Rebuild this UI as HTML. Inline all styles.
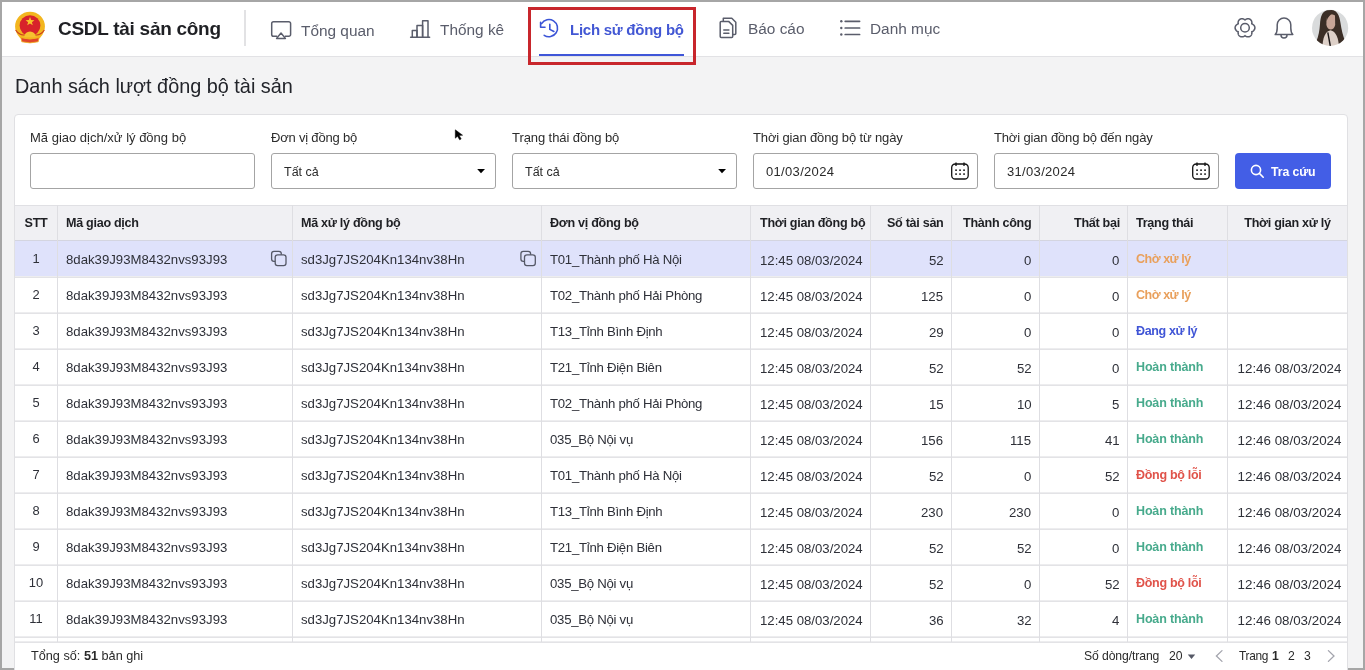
<!DOCTYPE html><html><head><meta charset="utf-8"><style>
*{box-sizing:border-box;margin:0;padding:0}
html,body{width:1365px;height:670px;overflow:hidden;background:#f3f3f4;font-family:"Liberation Sans",sans-serif;color:#222;position:relative}
div{position:absolute;white-space:nowrap}
.gb{background:#a6a6a6}
#hdr{left:2px;top:2px;width:1361px;height:54px;background:#fff}
#hline{left:2px;top:56px;width:1361px;height:1px;background:#e2e2e5}
.brand{left:58px;top:18.5px;font-size:19px;letter-spacing:-0.28px;line-height:20px;font-weight:700;color:#1f2024}
.vdiv{left:244px;top:10px;width:1.5px;height:36px;background:#e2e2e4}
.nav{top:22px;font-size:15.4px;line-height:18px;color:#5a5d6b}
.nav.act{color:#4257d4;font-weight:700;font-size:15px;letter-spacing:-0.25px}
.uline{left:539px;top:54px;width:145px;height:2px;background:#3f56d8}
.redbox{left:528px;top:7px;width:168px;height:58px;border:3px solid #c8262c}
.title{left:15px;top:75px;font-size:19.85px;line-height:22px;color:#22242a}
#card{left:14px;top:114px;width:1334px;height:600px;background:#fff;border:1px solid #e0e0e3;border-radius:4px}
.lbl{top:130px;font-size:13px;line-height:15px;color:#2c2c2c}
.inp{top:153px;width:225px;height:36px;border:1px solid #a4a4a4;border-radius:3px;background:#fff}
.inp span{position:absolute;left:12px;top:11px;font-size:12.5px;line-height:14px;color:#2a2a2a}
.btn{left:1235px;top:153px;width:96px;height:36px;background:#435ee6;border-radius:4px}
.btn span{position:absolute;left:36px;top:11.5px;font-size:12.3px;letter-spacing:-0.1px;line-height:15px;font-weight:700;color:#fff}
.thbg{left:15px;width:1332px;background:#f0f0f3}
.selbg{left:15px;width:1332px;background:#dfe2fb}
.hl{left:15px;width:1332px;height:1px;background:#e0e0e4}
.hl.hb{background:#d4d5e0}
.vl{width:1px;background:#dedee2}
.t{line-height:15px}
.ctr{text-align:center}
.th{font-size:12.6px;letter-spacing:-0.3px;font-weight:700;color:#1f2024}
.td{font-size:13.2px;letter-spacing:0px;color:#2e3038}
.st{font-size:12.5px;letter-spacing:-0.35px;font-weight:700}
.or{color:#e9a05c}.bl{color:#4055d6}.gr{color:#47aa8c}.rd{color:#e0534a}
.foot{left:31.4px;top:649px;font-size:12.7px;line-height:15px;color:#2a2a2a}
.pg{top:649px;font-size:12.5px;line-height:15px;color:#2a2a2a}

.dv{letter-spacing:-0.27px}
.inp span.dt{letter-spacing:0.32px;font-size:13px;top:11px}

.stt{font-size:12.9px}
body{-webkit-font-smoothing:antialiased}div.t,.nav,.brand,.title,.lbl,.inp span,.btn span,.foot,.pg{will-change:transform}

.tx{font-size:13.35px}

.hl2{left:15px;width:1332px;height:2px;border-top:1px solid #ededef;background:#e3e3e6}

</style></head><body>
<div class="gb" style="left:0;top:0;width:1365px;height:2px"></div>
<div class="gb" style="left:0;top:0;width:2px;height:670px"></div>
<div class="gb" style="left:1363px;top:0;width:2px;height:670px"></div>
<div class="gb" style="left:0;top:668px;width:1365px;height:2px"></div>
<div id="hdr"></div>
<div id="hline"></div>
<div class="brand">CSDL tài sản công</div>
<div class="vdiv"></div>
<div class="nav" style="left:301px;top:21.6px">Tổng quan</div>
<div class="nav" style="left:440px;top:20.5px">Thống kê</div>
<div class="nav act" style="left:570px;top:20.9px">Lịch sử đồng bộ</div>
<div class="nav" style="left:748px;top:19.5px">Báo cáo</div>
<div class="nav" style="left:870px;top:19.5px">Danh mục</div>
<div class="uline"></div>
<div class="redbox"></div>
<div class="title">Danh sách lượt đồng bộ tài sản</div>
<div id="card"></div>
<div class="lbl" style="left:30px;letter-spacing:0px">Mã giao dịch/xử lý đồng bộ</div>
<div class="lbl" style="left:271px;letter-spacing:-0.2px">Đơn vị đồng bộ</div>
<div class="lbl" style="left:512px;letter-spacing:-0.08px">Trạng thái đồng bộ</div>
<div class="lbl" style="left:753px;letter-spacing:-0.14px">Thời gian đồng bộ từ ngày</div>
<div class="lbl" style="left:994px;letter-spacing:-0.15px">Thời gian đồng bộ đến ngày</div>
<div class="inp" style="left:30px"></div>
<div class="inp" style="left:271px"><span>Tất cả</span></div>
<div class="inp" style="left:512px"><span>Tất cả</span></div>
<div class="inp" style="left:753px"><span class="dt">01/03/2024</span></div>
<div class="inp" style="left:994px"><span class="dt">31/03/2024</span></div>
<div class="btn"><span>Tra cứu</span></div>

<div class="thbg" style="top:205px;height:35px"></div>
<div class="selbg" style="top:241px;height:35px"></div>
<div class="hl" style="top:205px"></div>
<div class="hl hb" style="top:240px"></div>
<div class="hl2" style="top:276px"></div>
<div class="hl2" style="top:312px"></div>
<div class="hl2" style="top:348px"></div>
<div class="hl2" style="top:384px"></div>
<div class="hl2" style="top:420px"></div>
<div class="hl2" style="top:456px"></div>
<div class="hl2" style="top:492px"></div>
<div class="hl2" style="top:528px"></div>
<div class="hl2" style="top:564px"></div>
<div class="hl2" style="top:600px"></div>
<div class="hl2" style="top:636px"></div>
<div class="hl2" style="top:641px"></div>
<div class="vl" style="left:57px;top:205px;height:437px"></div>
<div class="vl" style="left:292px;top:205px;height:437px"></div>
<div class="vl" style="left:541px;top:205px;height:437px"></div>
<div class="vl" style="left:750px;top:205px;height:437px"></div>
<div class="vl" style="left:870px;top:205px;height:437px"></div>
<div class="vl" style="left:951px;top:205px;height:437px"></div>
<div class="vl" style="left:1039px;top:205px;height:437px"></div>
<div class="vl" style="left:1127px;top:205px;height:437px"></div>
<div class="vl" style="left:1227px;top:205px;height:437px"></div>
<div class="t th ctr" style="left:15px;width:42px;top:216px">STT</div>
<div class="t th" style="left:66px;top:216px">Mã giao dịch</div>
<div class="t th" style="left:301px;top:216px">Mã xử lý đồng bộ</div>
<div class="t th" style="left:550px;top:216px">Đơn vị đồng bộ</div>
<div class="t th" style="left:760px;top:216px">Thời gian đồng bộ</div>
<div class="t th" style="right:421.5px;top:216px">Số tài sản</div>
<div class="t th" style="right:333.5px;top:216px">Thành công</div>
<div class="t th" style="right:245.5px;top:216px">Thất bại</div>
<div class="t th" style="left:1136px;top:216px">Trạng thái</div>
<div class="t th ctr" style="left:1228px;width:119px;top:216px">Thời gian xử lý</div>
<div class="t td stt ctr" style="left:15px;width:42px;top:251px">1</div>
<div class="t td" style="left:66px;top:252px">8dak39J93M8432nvs93J93</div>
<div class="t td" style="left:301px;top:252px">sd3Jg7JS204Kn134nv38Hn</div>
<div class="t td dv" style="left:550px;top:252px">T01_Thành phố Hà Nội</div>
<div class="t td" style="left:760px;top:253px">12:45 08/03/2024</div>
<div class="t td" style="right:421.5px;top:253px">52</div>
<div class="t td" style="right:333.5px;top:253px">0</div>
<div class="t td" style="right:245.5px;top:253px">0</div>
<div class="t st or" style="letter-spacing:-0.47px;left:1136px;top:252px">Chờ xử lý</div>
<div class="t td stt ctr" style="left:15px;width:42px;top:287px">2</div>
<div class="t td" style="left:66px;top:288px">8dak39J93M8432nvs93J93</div>
<div class="t td" style="left:301px;top:288px">sd3Jg7JS204Kn134nv38Hn</div>
<div class="t td dv" style="left:550px;top:288px">T02_Thành phố Hải Phòng</div>
<div class="t td" style="left:760px;top:289px">12:45 08/03/2024</div>
<div class="t td" style="right:421.5px;top:289px">125</div>
<div class="t td" style="right:333.5px;top:289px">0</div>
<div class="t td" style="right:245.5px;top:289px">0</div>
<div class="t st or" style="letter-spacing:-0.47px;left:1136px;top:288px">Chờ xử lý</div>
<div class="t td stt ctr" style="left:15px;width:42px;top:323px">3</div>
<div class="t td" style="left:66px;top:324px">8dak39J93M8432nvs93J93</div>
<div class="t td" style="left:301px;top:324px">sd3Jg7JS204Kn134nv38Hn</div>
<div class="t td dv" style="left:550px;top:324px">T13_Tỉnh Bình Định</div>
<div class="t td" style="left:760px;top:325px">12:45 08/03/2024</div>
<div class="t td" style="right:421.5px;top:325px">29</div>
<div class="t td" style="right:333.5px;top:325px">0</div>
<div class="t td" style="right:245.5px;top:325px">0</div>
<div class="t st bl" style="letter-spacing:-0.35px;left:1136px;top:324px">Đang xử lý</div>
<div class="t td stt ctr" style="left:15px;width:42px;top:359px">4</div>
<div class="t td" style="left:66px;top:360px">8dak39J93M8432nvs93J93</div>
<div class="t td" style="left:301px;top:360px">sd3Jg7JS204Kn134nv38Hn</div>
<div class="t td dv" style="left:550px;top:360px">T21_Tỉnh Điện Biên</div>
<div class="t td" style="left:760px;top:361px">12:45 08/03/2024</div>
<div class="t td" style="right:421.5px;top:361px">52</div>
<div class="t td" style="right:333.5px;top:361px">52</div>
<div class="t td" style="right:245.5px;top:361px">0</div>
<div class="t st gr" style="letter-spacing:-0.15px;left:1136px;top:360px">Hoàn thành</div>
<div class="t td tx ctr" style="left:1229.5px;width:119.0px;top:361px">12:46 08/03/2024</div>
<div class="t td stt ctr" style="left:15px;width:42px;top:395px">5</div>
<div class="t td" style="left:66px;top:396px">8dak39J93M8432nvs93J93</div>
<div class="t td" style="left:301px;top:396px">sd3Jg7JS204Kn134nv38Hn</div>
<div class="t td dv" style="left:550px;top:396px">T02_Thành phố Hải Phòng</div>
<div class="t td" style="left:760px;top:397px">12:45 08/03/2024</div>
<div class="t td" style="right:421.5px;top:397px">15</div>
<div class="t td" style="right:333.5px;top:397px">10</div>
<div class="t td" style="right:245.5px;top:397px">5</div>
<div class="t st gr" style="letter-spacing:-0.15px;left:1136px;top:396px">Hoàn thành</div>
<div class="t td tx ctr" style="left:1229.5px;width:119.0px;top:397px">12:46 08/03/2024</div>
<div class="t td stt ctr" style="left:15px;width:42px;top:431px">6</div>
<div class="t td" style="left:66px;top:432px">8dak39J93M8432nvs93J93</div>
<div class="t td" style="left:301px;top:432px">sd3Jg7JS204Kn134nv38Hn</div>
<div class="t td dv" style="left:550px;top:432px">035_Bộ Nội vụ</div>
<div class="t td" style="left:760px;top:433px">12:45 08/03/2024</div>
<div class="t td" style="right:421.5px;top:433px">156</div>
<div class="t td" style="right:333.5px;top:433px">115</div>
<div class="t td" style="right:245.5px;top:433px">41</div>
<div class="t st gr" style="letter-spacing:-0.15px;left:1136px;top:432px">Hoàn thành</div>
<div class="t td tx ctr" style="left:1229.5px;width:119.0px;top:433px">12:46 08/03/2024</div>
<div class="t td stt ctr" style="left:15px;width:42px;top:467px">7</div>
<div class="t td" style="left:66px;top:468px">8dak39J93M8432nvs93J93</div>
<div class="t td" style="left:301px;top:468px">sd3Jg7JS204Kn134nv38Hn</div>
<div class="t td dv" style="left:550px;top:468px">T01_Thành phố Hà Nội</div>
<div class="t td" style="left:760px;top:469px">12:45 08/03/2024</div>
<div class="t td" style="right:421.5px;top:469px">52</div>
<div class="t td" style="right:333.5px;top:469px">0</div>
<div class="t td" style="right:245.5px;top:469px">52</div>
<div class="t st rd" style="letter-spacing:-0.3px;left:1136px;top:468px">Đồng bộ lỗi</div>
<div class="t td tx ctr" style="left:1229.5px;width:119.0px;top:469px">12:46 08/03/2024</div>
<div class="t td stt ctr" style="left:15px;width:42px;top:503px">8</div>
<div class="t td" style="left:66px;top:504px">8dak39J93M8432nvs93J93</div>
<div class="t td" style="left:301px;top:504px">sd3Jg7JS204Kn134nv38Hn</div>
<div class="t td dv" style="left:550px;top:504px">T13_Tỉnh Bình Định</div>
<div class="t td" style="left:760px;top:505px">12:45 08/03/2024</div>
<div class="t td" style="right:421.5px;top:505px">230</div>
<div class="t td" style="right:333.5px;top:505px">230</div>
<div class="t td" style="right:245.5px;top:505px">0</div>
<div class="t st gr" style="letter-spacing:-0.15px;left:1136px;top:504px">Hoàn thành</div>
<div class="t td tx ctr" style="left:1229.5px;width:119.0px;top:505px">12:46 08/03/2024</div>
<div class="t td stt ctr" style="left:15px;width:42px;top:539px">9</div>
<div class="t td" style="left:66px;top:540px">8dak39J93M8432nvs93J93</div>
<div class="t td" style="left:301px;top:540px">sd3Jg7JS204Kn134nv38Hn</div>
<div class="t td dv" style="left:550px;top:540px">T21_Tỉnh Điện Biên</div>
<div class="t td" style="left:760px;top:541px">12:45 08/03/2024</div>
<div class="t td" style="right:421.5px;top:541px">52</div>
<div class="t td" style="right:333.5px;top:541px">52</div>
<div class="t td" style="right:245.5px;top:541px">0</div>
<div class="t st gr" style="letter-spacing:-0.15px;left:1136px;top:540px">Hoàn thành</div>
<div class="t td tx ctr" style="left:1229.5px;width:119.0px;top:541px">12:46 08/03/2024</div>
<div class="t td stt ctr" style="left:15px;width:42px;top:575px">10</div>
<div class="t td" style="left:66px;top:576px">8dak39J93M8432nvs93J93</div>
<div class="t td" style="left:301px;top:576px">sd3Jg7JS204Kn134nv38Hn</div>
<div class="t td dv" style="left:550px;top:576px">035_Bộ Nội vụ</div>
<div class="t td" style="left:760px;top:577px">12:45 08/03/2024</div>
<div class="t td" style="right:421.5px;top:577px">52</div>
<div class="t td" style="right:333.5px;top:577px">0</div>
<div class="t td" style="right:245.5px;top:577px">52</div>
<div class="t st rd" style="letter-spacing:-0.3px;left:1136px;top:576px">Đồng bộ lỗi</div>
<div class="t td tx ctr" style="left:1229.5px;width:119.0px;top:577px">12:46 08/03/2024</div>
<div class="t td stt ctr" style="left:15px;width:42px;top:611px">11</div>
<div class="t td" style="left:66px;top:612px">8dak39J93M8432nvs93J93</div>
<div class="t td" style="left:301px;top:612px">sd3Jg7JS204Kn134nv38Hn</div>
<div class="t td dv" style="left:550px;top:612px">035_Bộ Nội vụ</div>
<div class="t td" style="left:760px;top:613px">12:45 08/03/2024</div>
<div class="t td" style="right:421.5px;top:613px">36</div>
<div class="t td" style="right:333.5px;top:613px">32</div>
<div class="t td" style="right:245.5px;top:613px">4</div>
<div class="t st gr" style="letter-spacing:-0.15px;left:1136px;top:612px">Hoàn thành</div>
<div class="t td tx ctr" style="left:1229.5px;width:119.0px;top:613px">12:46 08/03/2024</div>
<div class="foot">Tổng số: <b>51</b> bản ghi</div>
<div class="pg" style="left:1084px;font-size:12.2px;letter-spacing:-0.1px">Số dòng/trang</div>
<div class="pg" style="left:1168.5px;font-size:12.2px">20</div>
<div class="pg" style="left:1239px;font-size:11.9px;letter-spacing:-0.3px">Trang</div>
<div class="pg" style="left:1272px;font-weight:700;font-size:12.2px">1</div>
<div class="pg" style="left:1288.3px;font-size:12.2px">2</div>
<div class="pg" style="left:1304px;font-size:12.2px">3</div>
<svg style="position:absolute;left:0;top:0" width="1365" height="670" viewBox="0 0 1365 670">
 <!-- emblem -->
 <g>
  <circle cx="30" cy="26.6" r="14.9" fill="#f3b61f"/>
  <circle cx="30" cy="25.6" r="10.4" fill="#d8232a"/>
  <path d="M30 17 L31.2 20.1 L34.4 20.2 L31.9 22.2 L32.8 25.3 L30 23.5 L27.2 25.3 L28.1 22.2 L25.6 20.2 L28.8 20.1Z" fill="#f7c42a"/>
  <path d="M24.2 37.2 A5.8 5.8 0 0 1 35.8 37.2 Z" fill="#f6c230"/>
  <path d="M15.6 30 Q19.5 35.5 24.5 35" stroke="#c9361f" stroke-width="1.1" fill="none"/>
  <path d="M44.4 30 Q40.5 35.5 35.5 35" stroke="#c9361f" stroke-width="1.1" fill="none"/>
  <path d="M20.8 37.6 Q30 40.6 39.2 37.6 L38.2 41.8 Q30 44 21.8 41.8 Z" fill="#e0462a" stroke="#f3b61f" stroke-width="0.8"/>
 </g>
 <!-- nav icons -->
 <g fill="none" stroke="#5a5d6b" stroke-width="1.5" stroke-linecap="round" stroke-linejoin="round">
  <path d="M276.8 36.2 H273.5 A1.8 1.8 0 0 1 271.7 34.4 V23.6 A1.8 1.8 0 0 1 273.5 21.8 H288.8 A1.8 1.8 0 0 1 290.6 23.6 V34.4 A1.8 1.8 0 0 1 288.8 36.2 H285.2"/>
  <path d="M281 33 L276.6 38.4 H285.4 Z"/>
  <path d="M410.6 37.2 H429.6"/>
  <path d="M412.3 37.2 V30.6 H417 V37.2"/>
  <path d="M417 37.2 V25.6 H422.6 V37.2"/>
  <path d="M422.6 37.2 V20.8 H428 V37.2"/>
  <path d="M723.3 21.3 V18.3 H731.8 L735.8 22.3 V33.6 A1 1 0 0 1 734.8 34.6 H733"/>
  <path d="M721.2 21.4 H728.6 L732.7 25.4 V36.4 A1 1 0 0 1 731.7 37.4 H721.2 A1 1 0 0 1 720.2 36.4 V22.4 A1 1 0 0 1 721.2 21.4 Z"/>
  <path d="M723.8 30.1 H728.9 M723.8 33.2 H728.9"/>
  <path d="M845.2 21.3 H859.6 M845.2 28 H859.6 M845.2 34.5 H859.6" stroke-width="1.7"/>
 </g>
 <g fill="#5a5d6b"><circle cx="841.3" cy="21.3" r="1.2"/><circle cx="841.3" cy="28" r="1.2"/><circle cx="841.3" cy="34.5" r="1.2"/></g>
 <g fill="none" stroke="#3b54d6" stroke-width="1.6" stroke-linecap="round" stroke-linejoin="round">
  <path d="M544.2 35.3 A8.6 8.6 0 1 0 541.6 23.6"/>
  <path d="M540.6 22.3 V27.2 H545"/>
  <path d="M549.8 24.2 V29.4 L553.9 31.5"/>
 </g>
 <!-- gear bell -->
 <g fill="none" stroke="#5a5d6b" stroke-width="1.5" stroke-linejoin="round">
  <path d="M1254.90 27.80 L1254.88 28.15 L1254.83 28.49 L1254.75 28.83 L1254.64 29.15 L1254.50 29.47 L1254.33 29.78 L1254.13 30.08 L1253.90 30.35 L1253.66 30.61 L1253.39 30.85 L1253.10 31.07 L1252.79 31.27 L1252.47 31.44 L1252.13 31.59 L1251.75 31.70 L1251.85 32.08 L1251.89 32.45 L1251.90 32.81 L1251.88 33.18 L1251.84 33.54 L1251.76 33.89 L1251.66 34.23 L1251.54 34.57 L1251.38 34.89 L1251.20 35.19 L1250.99 35.47 L1250.76 35.73 L1250.51 35.97 L1250.24 36.19 L1249.95 36.37 L1249.64 36.53 L1249.32 36.66 L1248.99 36.76 L1248.65 36.83 L1248.30 36.86 L1247.95 36.87 L1247.59 36.84 L1247.24 36.79 L1246.89 36.70 L1246.55 36.59 L1246.22 36.45 L1245.89 36.28 L1245.58 36.09 L1245.28 35.87 L1245.00 35.60 L1244.72 35.87 L1244.42 36.09 L1244.11 36.28 L1243.78 36.45 L1243.45 36.59 L1243.11 36.70 L1242.76 36.79 L1242.41 36.84 L1242.05 36.87 L1241.70 36.86 L1241.35 36.83 L1241.01 36.76 L1240.68 36.66 L1240.36 36.53 L1240.05 36.37 L1239.76 36.19 L1239.49 35.97 L1239.24 35.73 L1239.01 35.47 L1238.80 35.19 L1238.62 34.89 L1238.46 34.57 L1238.34 34.23 L1238.24 33.89 L1238.16 33.54 L1238.12 33.18 L1238.10 32.81 L1238.11 32.45 L1238.15 32.08 L1238.25 31.70 L1237.87 31.59 L1237.53 31.44 L1237.21 31.27 L1236.90 31.07 L1236.61 30.85 L1236.34 30.61 L1236.10 30.35 L1235.87 30.08 L1235.67 29.78 L1235.50 29.47 L1235.36 29.15 L1235.25 28.83 L1235.17 28.49 L1235.12 28.15 L1235.10 27.80 L1235.12 27.45 L1235.17 27.11 L1235.25 26.77 L1235.36 26.45 L1235.50 26.13 L1235.67 25.82 L1235.87 25.52 L1236.10 25.25 L1236.34 24.99 L1236.61 24.75 L1236.90 24.53 L1237.21 24.33 L1237.53 24.16 L1237.87 24.01 L1238.25 23.90 L1238.15 23.52 L1238.11 23.15 L1238.10 22.79 L1238.12 22.42 L1238.16 22.06 L1238.24 21.71 L1238.34 21.37 L1238.46 21.03 L1238.62 20.71 L1238.80 20.41 L1239.01 20.13 L1239.24 19.87 L1239.49 19.63 L1239.76 19.41 L1240.05 19.23 L1240.36 19.07 L1240.68 18.94 L1241.01 18.84 L1241.35 18.77 L1241.70 18.74 L1242.05 18.73 L1242.41 18.76 L1242.76 18.81 L1243.11 18.90 L1243.45 19.01 L1243.78 19.15 L1244.11 19.32 L1244.42 19.51 L1244.72 19.73 L1245.00 20.00 L1245.28 19.73 L1245.58 19.51 L1245.89 19.32 L1246.22 19.15 L1246.55 19.01 L1246.89 18.90 L1247.24 18.81 L1247.59 18.76 L1247.95 18.73 L1248.30 18.74 L1248.65 18.77 L1248.99 18.84 L1249.32 18.94 L1249.64 19.07 L1249.95 19.23 L1250.24 19.41 L1250.51 19.63 L1250.76 19.87 L1250.99 20.13 L1251.20 20.41 L1251.38 20.71 L1251.54 21.03 L1251.66 21.37 L1251.76 21.71 L1251.84 22.06 L1251.88 22.42 L1251.90 22.79 L1251.89 23.15 L1251.85 23.52 L1251.75 23.90 L1252.13 24.01 L1252.47 24.16 L1252.79 24.33 L1253.10 24.53 L1253.39 24.75 L1253.66 24.99 L1253.90 25.25 L1254.13 25.52 L1254.33 25.82 L1254.50 26.13 L1254.64 26.45 L1254.75 26.77 L1254.83 27.11 L1254.88 27.45 L1254.90 27.80Z"/>
  <circle cx="1245" cy="27.8" r="4.3"/>
  <path d="M1275.2 34.6 H1292.8 C1291.6 33.4 1290.8 31.5 1290.8 28 V24.8 A6.8 6.8 0 0 0 1277.2 24.8 V28 C1277.2 31.5 1276.4 33.4 1275.2 34.6 Z"/>
  <path d="M1281 35 A3 3 0 0 0 1287 35"/>
 </g>
 <!-- avatar -->
 <defs><clipPath id="av"><circle cx="1330.1" cy="27.9" r="18.1"/></clipPath><filter id="bl" x="-10%" y="-10%" width="120%" height="120%"><feGaussianBlur stdDeviation="0.55"/></filter></defs>
 <g clip-path="url(#av)"><g filter="url(#bl)">
  <rect x="1310" y="8" width="40" height="40" fill="#d9dbdc"/>
  <path d="M1327 10.3 C1322 11.5 1320.5 17 1320 24 C1319.5 31 1318.5 36 1316.5 41 L1320 46 L1342 46 L1345 41 C1343 36 1341.5 30 1340.5 23 C1339.5 15 1337 10.5 1331.5 10 Z" fill="#3b2e26"/>
  <path d="M1326.5 14.5 C1328.5 14 1333.5 14 1335 15.5 L1335.2 25 C1334.5 28 1332.5 29.5 1330.8 29.5 C1329 29.5 1327 28 1326.4 25 Z" fill="#c7a597"/>
  <path d="M1325.5 13.5 C1327 12.5 1331 12.2 1333 13.5 C1330 14.5 1328 17 1326.6 21 Z" fill="#3b2e26"/>
  <path d="M1322.4 47 C1322.8 38 1325 31.5 1330.5 30.3 C1336 31.5 1338.5 38 1339 47 Z" fill="#ddd0c8"/>
  <path d="M1327.8 32.3 L1330.3 46" stroke="#1b1716" stroke-width="1.4"/>
 </g></g>
 <!-- dropdown arrows -->
 <path d="M477.2 168.9 H485 L481 173.2 Z" fill="#000"/>
 <path d="M718.2 168.9 H726 L722 173.2 Z" fill="#000"/>
 <!-- calendars -->
 <g fill="none" stroke="#111" stroke-width="1.3">
  <rect x="951.7" y="164" width="16.5" height="15" rx="3.6"/>
  <path d="M956 162.4 V166 M964 162.4 V166"/>
  <rect x="1192.7" y="164" width="16.5" height="15" rx="3.6"/>
  <path d="M1197 162.4 V166 M1205 162.4 V166"/>
 </g>
 <g fill="#222">
  <rect x="955.2" y="169.4" width="1.7" height="1.6"/><rect x="959.2" y="169.4" width="1.7" height="1.6"/><rect x="963.2" y="169.4" width="1.7" height="1.6"/>
  <rect x="955.2" y="173.3" width="1.7" height="1.6"/><rect x="959.2" y="173.3" width="1.7" height="1.6"/><rect x="963.2" y="173.3" width="1.7" height="1.6"/>
  <rect x="1196.2" y="169.4" width="1.7" height="1.6"/><rect x="1200.2" y="169.4" width="1.7" height="1.6"/><rect x="1204.2" y="169.4" width="1.7" height="1.6"/>
  <rect x="1196.2" y="173.3" width="1.7" height="1.6"/><rect x="1200.2" y="173.3" width="1.7" height="1.6"/><rect x="1204.2" y="173.3" width="1.7" height="1.6"/>
 </g>
 <!-- search icon -->
 <g fill="none" stroke="#fff" stroke-width="1.6" stroke-linecap="round">
  <circle cx="1256" cy="170" r="4.6"/>
  <path d="M1259.4 173.4 L1263.2 177.2"/>
 </g>
 <!-- copy icons -->
 <g fill="none" stroke="#555866" stroke-width="1.3">
  <path d="M275.2 261.3 H274 A2.4 2.4 0 0 1 271.6 258.9 V253.7 A2.4 2.4 0 0 1 274 251.3 H278.9 A2.4 2.4 0 0 1 281.3 253.7 V254.7"/>
  <rect x="275.2" y="254.8" width="10.8" height="10.8" rx="2.4"/>
  <path d="M524.5 261.3 H523.3 A2.4 2.4 0 0 1 520.9 258.9 V253.7 A2.4 2.4 0 0 1 523.3 251.3 H528.2 A2.4 2.4 0 0 1 530.6 253.7 V254.7"/>
  <rect x="524.5" y="254.8" width="10.8" height="10.8" rx="2.4"/>
 </g>
 <!-- cursor -->
 <path d="M455.3 129.8 L455.3 138.2 L457.5 136.2 L459.6 139.8 L461.2 139 L459.2 135.4 L462.6 135.2 Z" fill="#000" stroke="#000" stroke-width="0.5"/>
 <!-- pagination -->
 <path d="M1187.8 654.4 H1195.2 L1191.5 659 Z" fill="#555866"/>
 <g fill="none" stroke="#a3a4ad" stroke-width="1.3" stroke-linecap="round">
  <path d="M1222 650.6 L1216.4 656 L1222 661.4"/>
  <path d="M1328.4 650.6 L1334 656 L1328.4 661.4"/>
 </g>
</svg>

</body></html>
